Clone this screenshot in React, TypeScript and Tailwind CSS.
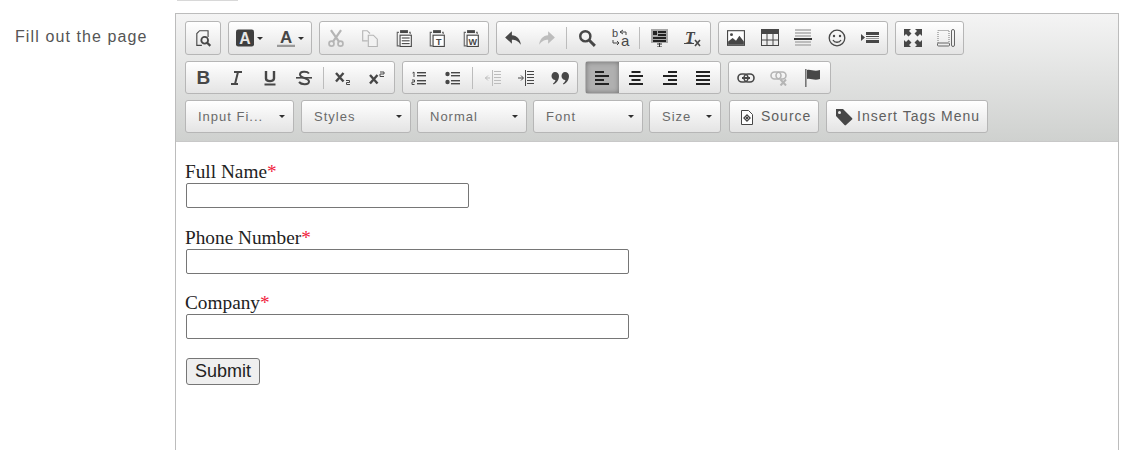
import type { ReactNode } from 'react';

const DARK = '#474747';
const LIGHT = '#b5b5b5';

// w/h is the drawing grid, size is what it is shown at
function Svg({ children, w = 16, h = 16, size = 1 }: { children: ReactNode; w?: number; h?: number; size?: number }) {
  return (
    <svg width={w * size} height={h * size} viewBox={`0 0 ${w} ${h}`} fill="none" className="block shrink-0">
      {children}
    </svg>
  );
}

const BIG = 1.125;

function Lines({ rows, color = DARK }: { rows: [number, number, number][]; color?: string }) {
  return (
    <>
      {rows.map(([x, y, w], i) => (
        <rect key={i} x={x} y={y} width={w} height={2} fill={color} />
      ))}
    </>
  );
}

function Clip({ letter }: { letter?: string }) {
  return (
    <Svg size={BIG}>
      <path d="M3.5 3H2V15H4M12.5 3H13.5V4.5" stroke="#666" strokeWidth="1" />
      <rect x="4.5" y="1" width="7" height="2.6" fill={DARK} />
      <rect x="4.5" y="5.5" width="10" height="10" fill="#fff" stroke={DARK} />
      {letter ? (
        <text x="9.5" y="14" fontSize="8" textAnchor="middle" fill={DARK} fontFamily="Liberation Sans, sans-serif" fontWeight="700">{letter}</text>
      ) : (
        <>
          <rect x="6" y="7.5" width="7" height="1" fill={DARK} />
          <rect x="6" y="10" width="7" height="1" fill={DARK} />
          <rect x="6" y="12.5" width="7" height="1" fill={DARK} />
        </>
      )}
    </Svg>
  );
}

const ICONS: Record<string, ReactNode> = {
  preview: (
    <Svg size={BIG}>
      <path d="M12.5 7V1.5H5L2.5 4V14.5H7" stroke={DARK} />
      <circle cx="9.5" cy="10" r="3" stroke={DARK} strokeWidth="1.6" />
      <path d="M11.5 12L14.5 15" stroke={DARK} strokeWidth="2" />
    </Svg>
  ),
  bgColor: (
    <Svg size={BIG}>
      <rect x="0" y="0.5" width="16" height="15" rx="2" fill="#3f3f3f" />
      <text x="8" y="13" fontSize="14" textAnchor="middle" fill="#e8e8e8" fontWeight="700" fontFamily="Liberation Sans, sans-serif">A</text>
    </Svg>
  ),
  textColor: (
    <Svg size={BIG}>
      <text x="8" y="12" fontSize="15" textAnchor="middle" fill={DARK} fontWeight="700" fontFamily="Liberation Sans, sans-serif">A</text>
      <rect x="0" y="14" width="16" height="2" fill="#9a9a9a" />
    </Svg>
  ),
  cut: (
    <Svg size={BIG}>
      <path d="M3.5 1L10.5 11M12.5 1L5.5 11" stroke={LIGHT} strokeWidth="2" />
      <circle cx="4" cy="13" r="2.2" stroke={LIGHT} strokeWidth="1.5" />
      <circle cx="12" cy="13" r="2.2" stroke={LIGHT} strokeWidth="1.5" />
    </Svg>
  ),
  copy: (
    <Svg size={BIG}>
      <path d="M6 10.5H1.5V1.5H5.5L8 4" stroke={LIGHT} />
      <path d="M6.5 5.5H11L14.5 9V15.5H6.5Z" stroke={LIGHT} fill="#f2f2f2" />
    </Svg>
  ),
  paste: <Clip />,
  pasteText: <Clip letter="T" />,
  pasteWord: <Clip letter="W" />,
  undo: (
    <Svg size={BIG}>
      <path d="M7 2L1 7.5L7 13V9.5C10 9.5 12.5 10.5 15 14C14.5 9 11.5 5.8 7 5.5Z" fill={DARK} />
    </Svg>
  ),
  redo: (
    <Svg size={BIG}>
      <path d="M9 2L15 7.5L9 13V9.5C6 9.5 3.5 10.5 1 14C1.5 9 4.5 5.8 9 5.5Z" fill="#bdbdbd" />
    </Svg>
  ),
  find: (
    <Svg size={BIG}>
      <circle cx="6.5" cy="6.5" r="4.5" stroke={DARK} strokeWidth="2.2" />
      <path d="M10 10L15 15" stroke={DARK} strokeWidth="2.6" />
    </Svg>
  ),
  replace: (
    <Svg w={19} h={21}>
      <text x="1" y="9" fontSize="11" fill={DARK} fontFamily="Liberation Sans, sans-serif">b</text>
      <text x="10" y="17.5" fontSize="15" fill={DARK} fontFamily="Liberation Sans, sans-serif">a</text>
      <path d="M9 4H15V7M12 2L9 4L12 6M2 12V15H8M6 13L8 15L6 17" stroke={DARK} />
    </Svg>
  ),
  selectAll: (
    <Svg w={18} h={18}>
      <rect x="0" y="0" width="17" height="14" fill="#a8a8a8" />
      <rect x="2" y="2" width="4" height="4" fill="#222" />
      <Lines rows={[[7, 2, 8], [7, 5, 8], [2, 8, 13], [2, 11, 13]]} color="#222" />
      <path d="M6 15H11M8.5 14V18M6 18H11" stroke="#333" />
    </Svg>
  ),
  removeFormat: (
    <Svg w={18} h={18}>
      <text x="1" y="13.5" fontSize="16" fontStyle="italic" fontWeight="700" fill={DARK} fontFamily="Liberation Serif, serif">T</text>
      <rect x="0" y="14" width="10" height="1" fill={DARK} />
      <path d="M11 11L16 17M16 11L11 17" stroke={DARK} strokeWidth="1.6" />
    </Svg>
  ),
  image: (
    <Svg size={BIG}>
      <rect x="0.5" y="1.5" width="15" height="13" fill="#fff" stroke={DARK} />
      <path d="M1 14V11L5 8L8 10.5L11 6L15 11V14Z" fill={DARK} />
      <circle cx="4" cy="5" r="1.3" fill={DARK} />
    </Svg>
  ),
  table: (
    <Svg w={18} h={18}>
      <rect x="0" y="0" width="18" height="5" fill={DARK} />
      <rect x="0.5" y="0.5" width="17" height="16" stroke={DARK} />
      <path d="M6 5V17M12 5V17M0 11H18" stroke={DARK} />
    </Svg>
  ),
  hr: (
    <Svg w={18} h={18}>
      <Lines rows={[[1, 0, 16], [1, 3, 16], [1, 6, 16], [1, 12, 16], [1, 15, 16]]} color="#bdbdbd" />
      <rect x="0" y="9" width="18" height="2" fill="#333" />
    </Svg>
  ),
  smile: (
    <Svg w={18} h={18}>
      <circle cx="9" cy="9" r="7.8" stroke={DARK} strokeWidth="1.3" />
      <circle cx="6" cy="7" r="1.2" fill={DARK} />
      <circle cx="12" cy="7" r="1.2" fill={DARK} />
      <path d="M5 11C6.5 14 11.5 14 13 11" stroke={DARK} strokeWidth="1.3" />
    </Svg>
  ),
  pageBreak: (
    <Svg w={18} h={18}>
      <path d="M0 5V12L4 8.5Z" fill={DARK} />
      <rect x="5" y="3" width="13" height="3" fill={DARK} />
      <rect x="5" y="7" width="13" height="1" fill={DARK} />
      <rect x="5" y="9" width="13" height="1" fill="#999" />
      <rect x="5" y="11" width="13" height="3" fill={DARK} />
    </Svg>
  ),
  maximize: (
    <Svg w={18} h={18}>
      <path d="M0 0H7L5 2L7.5 4.5L4.5 7.5L2 5L0 7ZM18 0H11L13 2L10.5 4.5L13.5 7.5L16 5L18 7ZM0 18H7L5 16L7.5 13.5L4.5 10.5L2 13L0 11ZM18 18H11L13 16L10.5 13.5L13.5 10.5L16 13L18 11Z" fill={DARK} />
    </Svg>
  ),
  blocks: (
    <Svg w={18} h={18}>
      <path d="M1 14V1.5H12V14" stroke="#777" strokeDasharray="1 1" />
      <rect x="0.5" y="14" width="12" height="3" rx="1" stroke="#666" />
      <rect x="14.5" y="0.5" width="3" height="17" rx="1.5" stroke="#666" />
    </Svg>
  ),
  bold: <span className="ml-px text-[19px] font-bold leading-none text-[#474747]">B</span>,
  italic: (
    <Svg>
      <path d="M6 2H14M3 14H10M10 2L7 14" stroke={DARK} strokeWidth="2" />
    </Svg>
  ),
  underline: (
    <Svg>
      <path d="M4 1V8.5C4 12 12 12 12 8.5V1" stroke={DARK} strokeWidth="2.4" />
      <rect x="2.5" y="13.5" width="11" height="2" fill={DARK} />
    </Svg>
  ),
  strike: (
    <Svg>
      <path d="M13 3.5C11 1 4 1.2 4 4.5C4 8.5 13 7.5 13 11.5C13 15 5.5 15 3 12" stroke={DARK} strokeWidth="2" />
      <rect x="0" y="7" width="16" height="1.6" fill={DARK} />
    </Svg>
  ),
  sub: (
    <Svg>
      <path d="M1 3L8.5 11.5M8.5 3L1 11.5" stroke={DARK} strokeWidth="2.4" />
      <path d="M11 10.5H14.5V12.5H11.5V14.5H15" stroke={DARK} />
    </Svg>
  ),
  sup: (
    <Svg>
      <path d="M1 5L8.5 13.5M8.5 5L1 13.5" stroke={DARK} strokeWidth="2.4" />
      <path d="M11 2H15V4H11V6.5H15" stroke={DARK} />
    </Svg>
  ),
  ol: (
    <Svg>
      <path d="M1.5 3L3 2V7" stroke={DARK} />
      <path d="M1 10H3.5V12H1V14.5H3.5" stroke={DARK} />
      <rect x="6" y="2" width="9" height="1.4" fill={DARK} />
      <rect x="6" y="5" width="9" height="1.4" fill={DARK} />
      <rect x="6" y="10" width="9" height="1.4" fill={DARK} />
      <rect x="6" y="13" width="9" height="1.4" fill={DARK} />
    </Svg>
  ),
  ul: (
    <Svg>
      <circle cx="2.5" cy="4" r="2.2" fill={DARK} />
      <circle cx="2.5" cy="12" r="2.2" fill={DARK} />
      <rect x="6" y="2" width="9" height="1.4" fill={DARK} />
      <rect x="6" y="5" width="9" height="1.4" fill={DARK} />
      <rect x="6" y="10" width="9" height="1.4" fill={DARK} />
      <rect x="6" y="13" width="9" height="1.4" fill={DARK} />
    </Svg>
  ),
  outdent: (
    <Svg>
      <rect x="9" y="1" width="7" height="1" fill="#bdbdbd" />
      <rect x="9" y="4" width="7" height="1" fill="#bdbdbd" />
      <rect x="9" y="7" width="7" height="1" fill="#bdbdbd" />
      <rect x="9" y="10" width="7" height="1" fill="#bdbdbd" />
      <rect x="9" y="13" width="7" height="1" fill="#bdbdbd" />
      <rect x="7" y="0" width="1" height="16" fill="#bdbdbd" />
      <path d="M0 8H5M3 5.5L0.5 8L3 10.5" stroke="#bdbdbd" />
    </Svg>
  ),
  indent: (
    <Svg>
      <rect x="9" y="1" width="7" height="1" fill={DARK} />
      <rect x="9" y="4" width="7" height="1" fill={DARK} />
      <rect x="9" y="7" width="7" height="1" fill={DARK} />
      <rect x="9" y="10" width="7" height="1" fill={DARK} />
      <rect x="9" y="13" width="7" height="1" fill={DARK} />
      <rect x="7" y="0" width="1" height="16" fill={DARK} />
      <path d="M0 8H5M3 5.5L5.5 8L3 10.5" stroke={DARK} />
    </Svg>
  ),
  quote: (
    <Svg w={18} h={14}>
      <path d="M4 1C6.5 1 8 2.8 8 5C8 8.5 6 12 2.5 13.5L2 12.5C3.5 11.5 4.3 10.3 4.4 9C2 9 0.5 7.2 0.5 5C0.5 2.8 2 1 4 1Z" fill={DARK} />
      <path d="M14 1C16.5 1 18 2.8 18 5C18 8.5 16 12 12.5 13.5L12 12.5C13.5 11.5 14.3 10.3 14.4 9C12 9 10.5 7.2 10.5 5C10.5 2.8 12 1 14 1Z" fill={DARK} />
    </Svg>
  ),
  left: <Svg><Lines rows={[[1, 1, 9], [1, 5, 14], [1, 9, 9], [1, 13, 14]]} color="#222" /></Svg>,
  center: <Svg><Lines rows={[[3.5, 1, 9], [1, 5, 14], [3.5, 9, 9], [1, 13, 14]]} color="#222" /></Svg>,
  right: <Svg><Lines rows={[[6, 1, 9], [1, 5, 14], [6, 9, 9], [1, 13, 14]]} color="#222" /></Svg>,
  justify: <Svg><Lines rows={[[1, 1, 14], [1, 5, 14], [1, 9, 14], [1, 13, 14]]} color="#222" /></Svg>,
  link: (
    <Svg w={18} h={12}>
      <rect x="1" y="2" width="10" height="8" rx="4" stroke={DARK} strokeWidth="1.6" />
      <rect x="7" y="2" width="10" height="8" rx="4" stroke={DARK} strokeWidth="1.6" />
      <rect x="5" y="5" width="8" height="2" fill={DARK} />
    </Svg>
  ),
  unlink: (
    <Svg w={18} h={16}>
      <rect x="1" y="2" width="10" height="7" rx="3.5" stroke={LIGHT} strokeWidth="1.6" />
      <rect x="6" y="2" width="10" height="7" rx="3.5" stroke={LIGHT} strokeWidth="1.6" />
      <path d="M10.5 9.5L16 15.5M16 9.5L10.5 15.5" stroke={LIGHT} strokeWidth="2" />
    </Svg>
  ),
  anchor: (
    <Svg w={18} h={18}>
      <rect x="1" y="0" width="1.6" height="18" fill="#777" />
      <path d="M3 1C7 0 10 3 16 1V10C10 12 7 9 3 10Z" fill={DARK} />
    </Svg>
  ),
  source: (
    <Svg>
      <path d="M2.5 1.5H9.5L13.5 5.5V15.5H2.5Z" fill="#fff" stroke={DARK} />
      <path d="M8 6L11 9L8 12L5 9Z" fill="#fff" stroke={DARK} strokeWidth="1.4" />
      <rect x="7" y="8" width="2" height="2" fill={DARK} />
    </Svg>
  ),
  tag: (
    <Svg w={18} h={18}>
      <path d="M1 1H8L17 10C17.5 10.7 17.5 11 17 11.6L11 17C10.5 17.5 10 17.5 9.5 17L1 8Z" fill={DARK} />
      <circle cx="4.5" cy="4.5" r="1.5" fill="#eee" />
    </Svg>
  ),
};

const SEP = '|';

function Caret() {
  return <span className="ml-[3px] h-0 w-0 border-x-[3px] border-t-[3px] border-x-transparent border-t-[#2f2f2f]" />;
}

function Group({ items, h, active }: { items: string[]; h: string; active?: string }) {
  return (
    <div className={`flex items-center rounded-[3px] border border-[#b6b6b6] bg-gradient-to-b from-white to-[#e4e4e4] ${h}`}>
      {items.map((id, i) =>
        id === SEP ? (
          <span key={i} className="mx-[2.5px] h-[22px] w-px bg-[#bcbcbc]" />
        ) : id.endsWith('+') ? (
          <span key={i} className="flex h-full w-[41px] items-center justify-center">
            {ICONS[id.slice(0, -1)]}
            <Caret />
          </span>
        ) : (
          <span
            key={i}
            className={`flex h-full w-[33.6px] items-center justify-center ${
              id === active ? 'bg-[#b0b0b0] shadow-[inset_0_0_5px_#6f6f6f]' : ''
            }`}
          >
            {ICONS[id]}
          </span>
        ),
      )}
    </div>
  );
}

function Combo({ label, w }: { label: string; w: string }) {
  return (
    <div className={`flex h-[33px] items-center justify-between rounded-[3px] border border-[#b6b6b6] bg-gradient-to-b from-white to-[#e4e4e4] pl-[12px] pr-[8px] text-[13px] tracking-[1px] text-[#6a6a6a] ${w}`}>
      <span>{label}</span>
      <span className="h-0 w-0 border-x-[3px] border-t-[3px] border-x-transparent border-t-[#2f2f2f]" />
    </div>
  );
}

function ToolButton({ icon, label, className }: { icon: string; label: string; className: string }) {
  return (
    <div className={`flex h-[33px] items-center rounded-[3px] border border-[#b6b6b6] bg-gradient-to-b from-white to-[#e4e4e4] pl-[8px] text-[14px] tracking-[1px] text-[#5f5f5f] ${className}`}>
      {ICONS[icon]}
      <span>{label}</span>
    </div>
  );
}

function Field({ label, w, mb }: { label: string; w: string; mb: string }) {
  return (
    <div className={mb}>
      <div className="h-[21px] text-[19.3px] leading-[19px] text-[#222]">
        {label}
        <span className="text-[#f0203c]">*</span>
      </div>
      <div className={`ml-px h-[25px] rounded-[2px] border border-[#767676] bg-white ${w}`} />
    </div>
  );
}

export default function App() {
  return (
    <div className="relative h-[450px] w-[1137px] overflow-hidden bg-white font-['Liberation_Sans',Arial,sans-serif]">
      <div className="absolute left-[177px] top-0 h-px w-[61px] bg-[#d8d8d8]" />
      <div className="flex pt-[13px]">
        <div className="w-[175px] pl-[15px] pt-[15px] text-[16px] leading-[18px] tracking-[1.1px] text-[#555]">
          Fill out the page
        </div>
        <div className="h-[500px] w-[944px] border border-[#bcbcbc]">
          <div className="flex h-[128px] flex-col gap-[6px] border-b border-[#c8c8c8] bg-gradient-to-b from-[#f4f4f4] to-[#cfd1cf] pl-[9px] pt-[7px]">
            <div className="flex gap-[7px]">
              <Group h="h-[34px]" items={['preview']} />
              <Group h="h-[34px]" items={['bgColor+', 'textColor+']} />
              <Group h="h-[34px]" items={['cut', 'copy', 'paste', 'pasteText', 'pasteWord']} />
              <Group h="h-[34px]" items={['undo', 'redo', SEP, 'find', 'replace', SEP, 'selectAll', 'removeFormat']} />
              <Group h="h-[34px]" items={['image', 'table', 'hr', 'smile', 'pageBreak']} />
              <Group h="h-[34px]" items={['maximize', 'blocks']} />
            </div>
            <div className="flex gap-[7px]">
              <Group h="h-[33px]" items={['bold', 'italic', 'underline', 'strike', SEP, 'sub', 'sup']} />
              <Group h="h-[33px]" items={['ol', 'ul', SEP, 'outdent', 'indent', 'quote']} />
              <Group h="h-[33px]" active="left" items={['left', 'center', 'right', 'justify']} />
              <Group h="h-[33px]" items={['link', 'unlink', 'anchor']} />
            </div>
            <div className="flex gap-[6px]">
              <div className="mr-px">
                <Combo label="Input Fi..." w="w-[109px]" />
              </div>
              <Combo label="Styles" w="w-[110px]" />
              <Combo label="Normal" w="w-[110px]" />
              <Combo label="Font" w="w-[110px]" />
              <div className="mr-[2px]">
                <Combo label="Size" w="w-[72px]" />
              </div>
              <ToolButton icon="source" label="Source" className="mr-px w-[90px] gap-[6px] pl-[9px]" />
              <ToolButton icon="tag" label="Insert Tags Menu" className="w-[162px] gap-[4px]" />
            </div>
          </div>
          <div className="pl-[9px] pt-[20px] font-['Liberation_Serif','Times_New_Roman',serif]">
            <Field label="Full Name" w="w-[283px]" mb="mb-[20px]" />
            <Field label="Phone Number" w="w-[443px]" mb="mb-[19px]" />
            <Field label="Company" w="w-[443px]" mb="mb-[19px]" />
            <button className="ml-px h-[27px] w-[74px] rounded-[3px] border border-[#767676] bg-[#efefef] pb-[2px] font-['Liberation_Sans',Arial,sans-serif] text-[18px] leading-none text-[#222]">
              Submit
            </button>
          </div>
        </div>
      </div>
    </div>
  );
}
